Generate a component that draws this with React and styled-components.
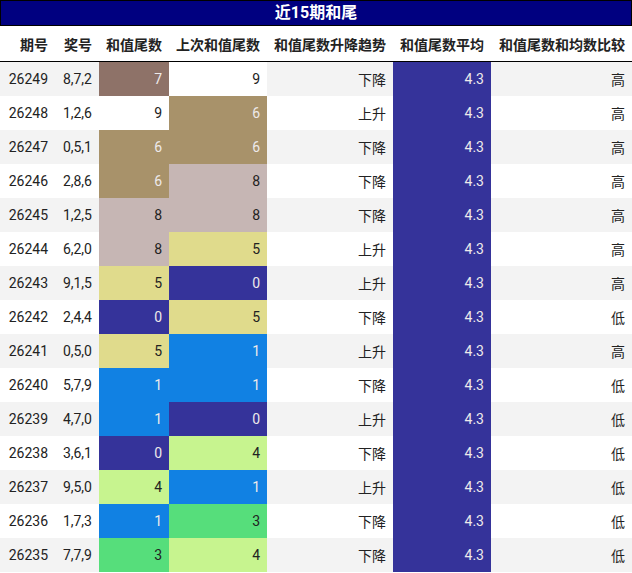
import React from "react";
import styled, { createGlobalStyle } from "styled-components";

const Global = createGlobalStyle`
  html, body { margin: 0; padding: 0; background: #fff; }
  body { font-family: Roboto, "Noto Sans CJK SC", sans-serif; }
`;

const Wrap = styled.div`
  width: 632px;
`;

const Title = styled.div`
  height: 24px;
  border: 1px solid #000;
  background: #000080;
  color: #fff;
  font-weight: bold;
  font-size: 16px;
  line-height: 24px;
  text-align: center;
`;

const Table = styled.table`
  width: 632px;
  border-collapse: collapse;
  table-layout: fixed;
  font-size: 14px;
  color: #222;
`;

const Th = styled.th`
  height: 35px;
  padding: 0 7px;
  text-align: right;
  font-weight: bold;
  font-size: 14px;
  color: #222;
  white-space: nowrap;
  border-bottom: 1px solid #000;
`;

const Tr = styled.tr`
  background: ${(p) => (p.$odd ? "#f3f3f3" : "#fff")};
`;

const Td = styled.td`
  height: 34px;
  padding: 0 7px;
  text-align: right;
  white-space: nowrap;
  background: ${(p) => p.$bg || "transparent"};
  color: ${(p) => (p.$light ? "#eeeaea" : "#222")};
`;

const palette = {
  0: { bg: "#35339a", light: true },
  1: { bg: "#1181e3", light: true },
  3: { bg: "#56de7b", light: false },
  4: { bg: "#c7f48f", light: false },
  5: { bg: "#e0db8c", light: false },
  6: { bg: "#a8926a", light: true },
  7: { bg: "#8e7268", light: true },
  8: { bg: "#c6b6b4", light: false },
  9: { bg: "#ffffff", light: false },
};

const rows = [
  ["26249", "8,7,2", 7, 9, "下降", "高"],
  ["26248", "1,2,6", 9, 6, "上升", "高"],
  ["26247", "0,5,1", 6, 6, "下降", "高"],
  ["26246", "2,8,6", 6, 8, "下降", "高"],
  ["26245", "1,2,5", 8, 8, "下降", "高"],
  ["26244", "6,2,0", 8, 5, "上升", "高"],
  ["26243", "9,1,5", 5, 0, "上升", "高"],
  ["26242", "2,4,4", 0, 5, "下降", "低"],
  ["26241", "0,5,0", 5, 1, "上升", "高"],
  ["26240", "5,7,9", 1, 1, "下降", "低"],
  ["26239", "4,7,0", 1, 0, "上升", "低"],
  ["26238", "3,6,1", 0, 4, "下降", "低"],
  ["26237", "9,5,0", 4, 1, "上升", "低"],
  ["26236", "1,7,3", 1, 3, "下降", "低"],
  ["26235", "7,7,9", 3, 4, "下降", "低"],
];

const widths = [55, 44, 70, 98, 126, 98, 141];
const heads = ["期号", "奖号", "和值尾数", "上次和值尾数", "和值尾数升降趋势", "和值尾数平均", "和值尾数和均数比较"];

const ValueCell = ({ v }) => (
  <Td $bg={palette[v].bg} $light={palette[v].light}>
    {v}
  </Td>
);

export default function App() {
  return (
    <Wrap>
      <Global />
      <Title>近15期和尾</Title>
      <Table>
        <colgroup>
          {widths.map((w, i) => (
            <col key={i} style={{ width: w }} />
          ))}
        </colgroup>
        <thead>
          <tr>
            {heads.map((h) => (
              <Th key={h}>{h}</Th>
            ))}
          </tr>
        </thead>
        <tbody>
          {rows.map((r, i) => (
            <Tr key={r[0]} $odd={i % 2 === 0}>
              <Td>{r[0]}</Td>
              <Td>{r[1]}</Td>
              <ValueCell v={r[2]} />
              <ValueCell v={r[3]} />
              <Td>{r[4]}</Td>
              <Td $bg="#35339a" $light>
                4.3
              </Td>
              <Td>{r[5]}</Td>
            </Tr>
          ))}
        </tbody>
      </Table>
    </Wrap>
  );
}
